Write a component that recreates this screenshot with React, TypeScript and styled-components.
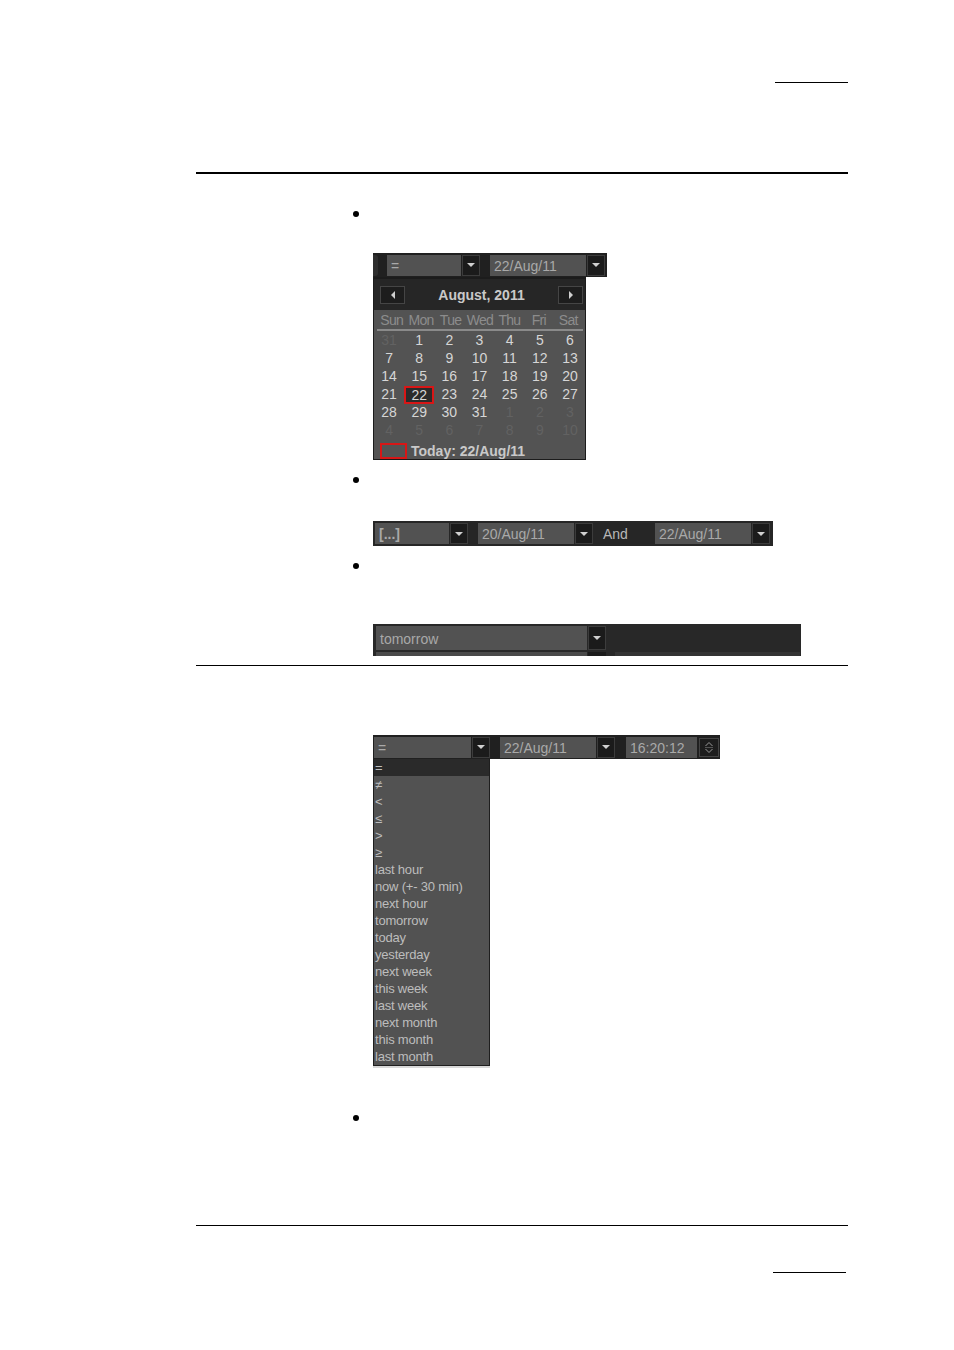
import React from "react";
import styled, { createGlobalStyle } from "styled-components";

const GlobalStyle = createGlobalStyle`
  html, body {
    margin: 0;
    padding: 0;
    background: #ffffff;
  }
  body {
    font-family: "Liberation Sans", Arial, sans-serif;
  }
`;

const Page = styled.div`
  width: 954px;
  min-height: 1350px;
  padding-left: 196px;
  box-sizing: border-box;
  display: flex;
  flex-direction: column;
  align-items: flex-start;
`;

const ShortRule = styled.div<{ $top: number; $left: number }>`
  margin-top: ${(p) => p.$top}px;
  margin-left: ${(p) => p.$left}px;
  width: 73px;
  height: 1px;
  background: #000;
`;

const Rule = styled.div<{ $top: number; $thick?: boolean }>`
  margin-top: ${(p) => p.$top}px;
  width: 652px;
  height: ${(p) => (p.$thick ? 2 : 1)}px;
  background: #000;
`;

const Bullet = styled.div<{ $top: number }>`
  margin-top: ${(p) => p.$top}px;
  margin-left: 157px;
  width: 6px;
  height: 6px;
  border-radius: 50%;
  background: #000;
`;

const Widget = styled.div<{ $top: number }>`
  margin-top: ${(p) => p.$top}px;
  margin-left: 177px;
  display: flex;
  flex-direction: column;
  align-items: flex-start;
  font-family: "Liberation Sans", Arial, sans-serif;
`;

const Bar = styled.div<{ $width: number; $height?: number; $bg?: string }>`
  width: ${(p) => p.$width}px;
  height: ${(p) => p.$height ?? 24}px;
  background: ${(p) => p.$bg ?? "#202020"};
  display: flex;
  align-items: center;
  box-sizing: border-box;
`;

const Stub = styled.div`
  width: 5px;
  height: 21px;
  background: #2e2e2e;
  border-radius: 0 3px 3px 0;
  margin-right: 9px;
`;

const Field = styled.div<{ $width: number; $height?: number; $bold?: boolean }>`
  width: ${(p) => p.$width}px;
  height: ${(p) => p.$height ?? 21}px;
  background: #525252;
  color: #a9a9a9;
  font-size: 14px;
  font-weight: ${(p) => (p.$bold ? 700 : 400)};
  line-height: ${(p) => (p.$height ?? 21) + 2}px;
  padding-left: 4px;
  box-sizing: border-box;
  white-space: nowrap;
  overflow: hidden;
`;

const DropButton = styled.div<{ $height?: number }>`
  width: 18px;
  height: ${(p) => p.$height ?? 21}px;
  background: #1b1b1b;
  border: 1px solid #3c3c3c;
  box-sizing: border-box;
  display: flex;
  align-items: center;
  justify-content: center;
  margin-left: 1px;
  &::after {
    content: "";
    border-left: 4px solid transparent;
    border-right: 4px solid transparent;
    border-top: 4px solid #d0d0d0;
  }
`;

const Gap = styled.div<{ $w: number }>`
  width: ${(p) => p.$w}px;
  flex-shrink: 0;
`;

const Label = styled.span`
  color: #b8b8b8;
  font-size: 14px;
  margin: 0 10px 0 10px;
`;

/* Calendar */
const Calendar = styled.div`
  width: 213px;
  height: 183px;
  background: #535353;
  border: 1px solid #1c1c1c;
  border-top: none;
  box-sizing: border-box;
  display: flex;
  flex-direction: column;
`;

const CalHeader = styled.div`
  height: 35px;
  background: #262626;
  border-top: 2px solid #1c1c1c;
  display: flex;
  align-items: center;
  justify-content: space-between;
  padding: 0 2px 0 6px;
  box-sizing: border-box;
`;

const NavButton = styled.div<{ $dir: "left" | "right" }>`
  width: 25px;
  height: 18px;
  background: #1d1d1d;
  border: 1px solid #454545;
  box-sizing: border-box;
  display: flex;
  align-items: center;
  justify-content: center;
  &::after {
    content: "";
    border-top: 4px solid transparent;
    border-bottom: 4px solid transparent;
    ${(p) =>
      p.$dir === "left"
        ? "border-right: 4px solid #cfcfcf;"
        : "border-left: 4px solid #cfcfcf;"}
  }
`;

const CalTitle = styled.div`
  color: #c9c9c9;
  font-weight: 700;
  font-size: 14px;
`;

const DayNames = styled.div`
  display: grid;
  grid-template-columns: repeat(7, 1fr);
  height: 18px;
  margin: 1px 2px 0 3px;
  border-bottom: 2px solid #8a8a8a;
  color: #8c8c8c;
  font-size: 14px;
  letter-spacing: -0.7px;
  line-height: 19px;
  text-align: center;
`;

const Days = styled.div`
  display: grid;
  grid-template-columns: repeat(7, 1fr);
  grid-auto-rows: 18px;
  margin-top: 0;
`;

const Day = styled.div<{ $muted?: boolean; $selected?: boolean }>`
  color: ${(p) => (p.$muted ? "#626262" : "#d6d6d6")};
  font-size: 14px;
  line-height: 18px;
  text-align: center;
  box-sizing: border-box;
  ${(p) =>
    p.$selected &&
    `
    border: 2px solid #d81616;
    background: #2b2b2b;
    line-height: 14px;
    margin: 1px 0 0 0;
    height: 18px;
  `}
`;

const TodayRow = styled.div`
  display: flex;
  align-items: center;
  margin-top: 4px;
  padding-left: 6px;
`;

const TodayBox = styled.div`
  width: 27px;
  height: 16px;
  border: 2px solid #d81616;
  box-sizing: border-box;
  margin-right: 4px;
`;

const TodayText = styled.span`
  color: #c9c9c9;
  font-weight: 700;
  font-size: 14px;
  line-height: 16px;
`;

/* Widget 3 */
const Strip = styled.div`
  width: 428px;
  height: 5px;
  background: #282828;
  display: flex;
  align-items: flex-end;
  padding-left: 3px;
  box-sizing: border-box;
`;

const StripPiece = styled.div<{ $w: number; $bg: string; $ml?: number }>`
  width: ${(p) => p.$w}px;
  height: 4px;
  background: ${(p) => p.$bg};
  margin-left: ${(p) => p.$ml ?? 0}px;
`;

/* Widget 4 */
const SpinButton = styled.div`
  width: 20px;
  height: 19px;
  margin-left: 2px;
  background: #1d1d1d;
  border: 1px solid #444;
  box-sizing: border-box;
  display: flex;
  align-items: center;
  justify-content: center;
`;

const List = styled.div`
  width: 117px;
  background: #525252;
  border: 1px solid #1e1e1e;
  border-top: none;
  box-sizing: border-box;
  box-shadow: 0 2px 0 #d8d8d8;
`;

const ListItem = styled.div<{ $active?: boolean }>`
  height: 17px;
  line-height: 18px;
  padding-left: 1px;
  font-size: 13px;
  letter-spacing: -0.2px;
  color: #bdbdbd;
  background: ${(p) => (p.$active ? "#2a2a2a" : "transparent")};
  white-space: nowrap;
`;

const weeks: { d: number; muted?: boolean }[][] = [
  [{ d: 31, muted: true }, { d: 1 }, { d: 2 }, { d: 3 }, { d: 4 }, { d: 5 }, { d: 6 }],
  [{ d: 7 }, { d: 8 }, { d: 9 }, { d: 10 }, { d: 11 }, { d: 12 }, { d: 13 }],
  [{ d: 14 }, { d: 15 }, { d: 16 }, { d: 17 }, { d: 18 }, { d: 19 }, { d: 20 }],
  [{ d: 21 }, { d: 22 }, { d: 23 }, { d: 24 }, { d: 25 }, { d: 26 }, { d: 27 }],
  [{ d: 28 }, { d: 29 }, { d: 30 }, { d: 31 }, { d: 1, muted: true }, { d: 2, muted: true }, { d: 3, muted: true }],
  [4, 5, 6, 7, 8, 9, 10].map((d) => ({ d, muted: true })),
];

const operators = [
  "=",
  "≠",
  "<",
  "≤",
  ">",
  "≥",
  "last hour",
  "now (+- 30 min)",
  "next hour",
  "tomorrow",
  "today",
  "yesterday",
  "next week",
  "this week",
  "last week",
  "next month",
  "this month",
  "last month",
];

export default function App() {
  return (
    <>
      <GlobalStyle />
      <Page>
        <ShortRule $top={82} $left={579} />
        <Rule $top={89} $thick />

        <Bullet $top={37} />
        <Widget $top={36}>
          <Bar $width={234}>
            <Stub />
            <Field $width={74}>=</Field>
            <DropButton />
            <Gap $w={10} />
            <Field $width={96}>22/Aug/11</Field>
            <DropButton />
          </Bar>
          <Calendar>
            <CalHeader>
              <NavButton $dir="left" />
              <CalTitle>August, 2011</CalTitle>
              <NavButton $dir="right" />
            </CalHeader>
            <DayNames>
              {["Sun", "Mon", "Tue", "Wed", "Thu", "Fri", "Sat"].map((n) => (
                <span key={n}>{n}</span>
              ))}
            </DayNames>
            <Days>
              {weeks.flat().map((c, i) => (
                <Day key={i} $muted={c.muted} $selected={!c.muted && c.d === 22}>
                  {c.d}
                </Day>
              ))}
            </Days>
            <TodayRow>
              <TodayBox />
              <TodayText>Today: 22/Aug/11</TodayText>
            </TodayRow>
          </Calendar>
        </Widget>

        <Bullet $top={17} />
        <Widget $top={38}>
          <Bar $width={400} $height={25} $bg="#262626">
            <Gap $w={2} />
            <Field $width={74} $bold>
              [...]
            </Field>
            <DropButton />
            <Gap $w={10} />
            <Field $width={96}>20/Aug/11</Field>
            <DropButton />
            <Label>And</Label>
            <Gap $w={17} />
            <Field $width={96}>22/Aug/11</Field>
            <DropButton />
          </Bar>
        </Widget>

        <Bullet $top={17} />
        <Widget $top={55}>
          <Bar $width={428} $height={27} $bg="#282828">
            <Gap $w={3} />
            <Field $width={211} $height={24}>
              tomorrow
            </Field>
            <DropButton $height={24} />
          </Bar>
          <Strip>
            <StripPiece $w={211} $bg="#4a4a4a" />
            <StripPiece $w={18} $bg="#1b1b1b" $ml={1} />
            <StripPiece $w={185} $bg="#343434" $ml={9} />
          </Strip>
        </Widget>

        <Rule $top={9} />

        <Widget $top={69}>
          <Bar $width={347}>
            <Gap $w={1} />
            <Field $width={97}>=</Field>
            <DropButton />
            <Gap $w={10} />
            <Field $width={96}>22/Aug/11</Field>
            <DropButton />
            <Gap $w={11} />
            <Field $width={71}>16:20:12</Field>
            <SpinButton>
              <svg width="10" height="13" viewBox="0 0 10 13">
                <path d="M1.5 5 L5 1.5 L8.5 5" fill="none" stroke="#9a9a9a" strokeWidth="1" />
                <path d="M1 6.5 H9" stroke="#555" strokeWidth="1" />
                <path d="M1.5 8 L5 11.5 L8.5 8" fill="none" stroke="#9a9a9a" strokeWidth="1" />
              </svg>
            </SpinButton>
          </Bar>
          <List>
            {operators.map((o, i) => (
              <ListItem key={o} $active={i === 0}>
                {o}
              </ListItem>
            ))}
          </List>
        </Widget>

        <Bullet $top={49} />
        <Rule $top={104} />
        <ShortRule $top={46} $left={577} />
      </Page>
    </>
  );
}
